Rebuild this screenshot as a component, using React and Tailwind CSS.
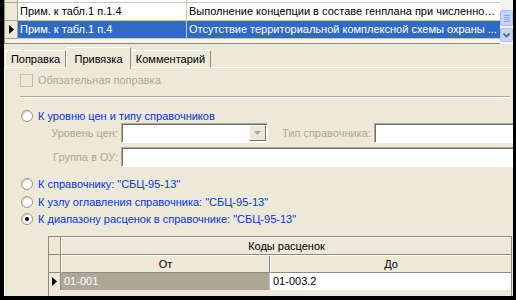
import React from 'react';

const Tri = ({ className = '' }) => (
  <svg width="5" height="9" viewBox="0 0 5 9" className={className}>
    <path d="M0 0 L5 4.5 L0 9 Z" fill="#000" />
  </svg>
);

const Radio = ({ checked }) => (
  <div className="w-[12px] h-[12px] rounded-full border border-[#9a9789] bg-white flex items-center justify-center shadow-[inset_1px_1px_1px_#d6d3c6] shrink-0">
    {checked && <div className="w-[4px] h-[4px] rounded-full bg-black" />}
  </div>
);

const RadioRow = ({ checked, children, className = '' }) => (
  <div className={`flex items-center h-[13px] ml-[16px] ${className}`}>
    <Radio checked={checked} />
    <span className="ml-[5px] text-[#0533e8] leading-none">{children}</span>
  </div>
);

const TopRow = ({ first, second, selected }) => (
  <div className="flex h-[18px]">
    <div className="w-[13px] shrink-0 bg-[#ECE9D8] border-r border-b border-[#a8a597] flex items-center justify-center">
      {selected && <Tri />}
    </div>
    <div className={`w-[169px] shrink-0 border-r border-b border-[#c9c7bc] px-[2px] leading-[17px] whitespace-nowrap overflow-hidden ${selected ? 'bg-[#316AC5] text-white' : 'bg-white text-black'}`}>
      {first}
    </div>
    <div className={`flex-1 min-w-0 border-b border-[#c9c7bc] px-[2px] leading-[17px] truncate ${selected ? 'bg-[#316AC5] text-white' : 'bg-white text-black'}`}>
      {second}
    </div>
  </div>
);

export default function App() {
  return (
    <div className="w-[516px] h-[300px] bg-black pl-[4px] pr-[3px] pb-[4px] overflow-hidden font-['Liberation_Sans',Arial,sans-serif] text-[11px]">
      <div className="h-full bg-[#ECE9D8] flex flex-col overflow-hidden">
        {/* top grid */}
        <div className="h-[44px] flex shrink-0">
          <div className="flex-1 min-w-0 flex flex-col border-l border-[#8e8b7e] border-b bg-[#f3f2ec]">
            <div className="flex h-[3px]">
              <div className="w-[13px] bg-[#ECE9D8] border-r border-b border-[#a8a597]" />
              <div className="w-[169px] bg-white border-r border-b border-[#c9c7bc]" />
              <div className="flex-1 bg-white border-b border-[#c9c7bc]" />
            </div>
            <TopRow first="Прим. к табл.1 п.1.4" second="Выполнение концепции в составе генплана при численнос..." />
            <TopRow selected first="Прим. к табл.1 п.4" second="Отсутствие территориальной комплексной схемы охраны ..." />
          </div>
          <div className="w-[13px] shrink-0 bg-[#f4f3ee] flex flex-col">
            <div className="h-[10px]" />
            <div className="h-[16px] rounded-[2px] border border-[#a9bff3] bg-[#c6d5fc] flex flex-col items-center justify-center gap-[1px]">
              <div className="w-[6px] h-[1px] bg-[#8ea6e4]" />
              <div className="w-[6px] h-[1px] bg-[#8ea6e4]" />
              <div className="w-[6px] h-[1px] bg-[#8ea6e4]" />
              <div className="w-[6px] h-[1px] bg-[#8ea6e4]" />
            </div>
            <div className="h-[2px]" />
            <div className="h-[14px] rounded-[2px] border border-[#a9bff3] bg-[#c6d5fc] flex items-center justify-center">
              <svg width="7" height="5" viewBox="0 0 7 5">
                <path d="M0.5 0.5 L3.5 3.5 L6.5 0.5" stroke="#4d6185" strokeWidth="1.6" fill="none" />
              </svg>
            </div>
          </div>
        </div>

        {/* tabs */}
        <div className="h-[24px] flex items-end pl-[1px] shrink-0">
          <div className="h-[18px] w-[61px] border-t border-l border-r border-white border-r-[#8e8b7e] flex items-center justify-center border-b border-b-white">
            Поправка
          </div>
          <div className="h-[22px] w-[65px] border-t border-l border-r border-white border-r-[#8e8b7e] flex items-start pt-[3px] justify-center relative z-10 -mb-[1px] bg-[#ECE9D8]">
            Привязка
          </div>
          <div className="h-[18px] w-[80px] border-t border-r border-white border-r-[#8e8b7e] flex items-center justify-center border-b border-b-white">
            Комментарий
          </div>
          <div className="flex-1 border-b border-white" />
        </div>

        {/* panel */}
        <div className="flex-1 border-l border-white flex flex-col overflow-hidden">
          <div className="flex items-center h-[13px] ml-[15px] mt-[6px]">
            <div className="w-[13px] h-[13px] border border-[#c2bfb2] bg-[#ECE9D8] shrink-0" />
            <span className="ml-[5px] text-[#aca899] leading-none">Обязательная поправка</span>
          </div>
          <div className="mt-[9px] ml-[15px] mr-[3px] h-[2px] border-t border-[#aca899] border-b border-b-white" />

          <RadioRow className="mt-[12px]">К уровню цен и типу справочников</RadioRow>

          <div className="flex items-center mt-[1px] h-[20px]">
            <span className="w-[113px] text-right text-[#aca899] shrink-0">Уровень цен:</span>
            <div className="ml-[3px] w-[147px] h-[20px] shrink-0 border border-t-[#aca899] border-l-[#aca899] border-r-white border-b-white bg-white flex justify-end p-[1px] shadow-[inset_1px_1px_0_#716f64]">
              <div className="w-[17px] h-full bg-[#ECE9D8] border border-white border-r-[#716f64] border-b-[#716f64] flex items-center justify-center">
                <svg width="7" height="4" viewBox="0 0 7 4"><path d="M0 0 H7 L3.5 4 Z" fill="#aca899" /></svg>
              </div>
            </div>
            <span className="ml-[14px] text-[#aca899] shrink-0">Тип справочника:</span>
            <div className="ml-[3px] w-[150px] h-[20px] shrink-0 border border-t-[#aca899] border-l-[#aca899] border-r-white border-b-white bg-white shadow-[inset_1px_1px_0_#716f64]" />
          </div>

          <div className="flex items-center mt-[4px] h-[20px]">
            <span className="w-[113px] text-right text-[#aca899] shrink-0">Группа в ОУ:</span>
            <div className="ml-[3px] w-[420px] h-[20px] shrink-0 border border-t-[#aca899] border-l-[#aca899] border-r-white border-b-white bg-white shadow-[inset_1px_1px_0_#716f64]" />
          </div>

          <RadioRow className="mt-[11px]">К справочнику: "СБЦ-95-13"</RadioRow>
          <RadioRow className="mt-[6px]">К узлу оглавления справочника: "СБЦ-95-13"</RadioRow>
          <RadioRow checked className="mt-[5px]">К диапазону расценок в справочнике: "СБЦ-95-13"</RadioRow>

          {/* inner grid */}
          <div className="mt-[11px] ml-[43px] mr-[1px] border border-[#8e8b7e] flex flex-col">
            <div className="flex h-[18px]">
              <div className="w-[12px] shrink-0 bg-[#ECE9D8] border-r border-b border-[#8e8b7e]" />
              <div className="flex-1 bg-[#ECE9D8] border-l border-t border-white border-b border-b-[#8e8b7e] flex items-center justify-center">
                Коды расценок
              </div>
            </div>
            <div className="flex h-[18px]">
              <div className="w-[12px] shrink-0 bg-[#ECE9D8] border-r border-b border-[#8e8b7e]" />
              <div className="w-[209px] shrink-0 bg-[#ECE9D8] border-l border-t border-white border-r border-r-[#8e8b7e] border-b border-b-[#8e8b7e] flex items-center justify-center">
                От
              </div>
              <div className="flex-1 bg-[#ECE9D8] border-l border-t border-white border-b border-b-[#8e8b7e] flex items-center justify-center">
                До
              </div>
            </div>
            <div className="flex h-[17px]">
              <div className="w-[12px] shrink-0 bg-[#ECE9D8] border-r border-[#8e8b7e] flex items-center justify-center">
                <Tri />
              </div>
              <div className="w-[209px] shrink-0 bg-[#aca899] text-white border-r border-[#c9c7bc] px-[3px] flex items-center">
                01-001
              </div>
              <div className="flex-1 bg-white text-black px-[3px] flex items-center">
                01-003.2
              </div>
            </div>
            <div className="h-[6px] bg-[#ECE9D8]" />
          </div>
        </div>
      </div>
    </div>
  );
}
